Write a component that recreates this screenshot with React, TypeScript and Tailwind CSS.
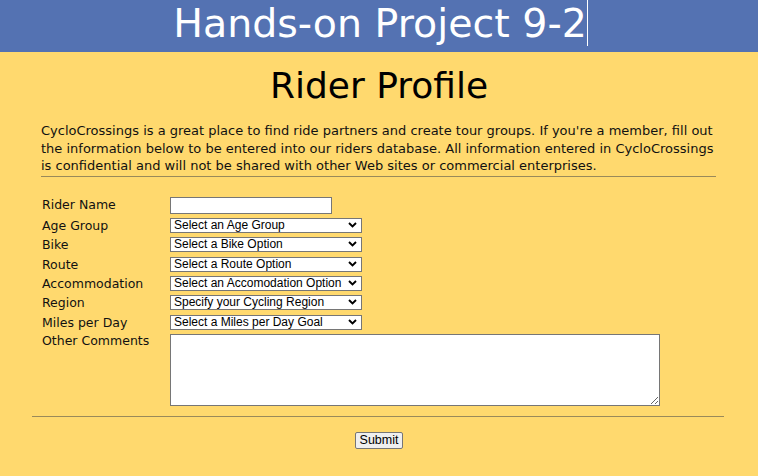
import React from "react";

const font = { fontFamily: '"DejaVu Sans", Verdana, sans-serif' };
const arial = { fontFamily: '"Liberation Sans", Arial, sans-serif' };

function Chevron() {
  return (
    <svg width="9" height="6" viewBox="0 0 9 6" className="pointer-events-none absolute right-[5px] top-[4px]">
      <path d="M1 1 L4.5 4.5 L8 1" stroke="#000" strokeWidth="1.9" fill="none" />
    </svg>
  );
}

function Sel({ text }: { text: string }) {
  return (
    <div className="relative w-[192px] h-[15px]">
      <select
        defaultValue="a"
        className="block w-full h-[15px] appearance-none border border-[#767676] bg-white pl-[3px] pr-[14px] py-0 text-[12px] leading-[13px] text-black outline-none"
        style={arial}
      >
        <option value="a">{text}</option>
      </select>
      <Chevron />
    </div>
  );
}

const rows: [string, string][] = [
  ["Age Group", "Select an Age Group"],
  ["Bike", "Select a Bike Option"],
  ["Route", "Select a Route Option"],
  ["Accommodation", "Select an Accomodation Option"],
  ["Region", "Specify your Cycling Region"],
  ["Miles per Day", "Select a Miles per Day Goal"],
];

export default function App() {
  return (
    <div className="w-[758px] h-[476px] bg-[#ffd96e] overflow-hidden" style={font}>
      <header className="h-[52px] bg-[#5472b2] flex justify-center items-start">
        <h1 className="relative text-white text-[39.5px] leading-[46px] pl-[2px]">
          Hands-on Project 9-2
          <span className="absolute -right-[1px] top-0 h-[46px] w-px bg-white" />
        </h1>
      </header>
      <h2 className="text-center text-[36px] leading-[40px] text-black mt-[14px]">Rider Profile</h2>
      <p className="mx-[41px] mt-[16px] text-[13px] leading-[17.5px] text-[#111]">
        CycloCrossings is a great place to find ride partners and create tour groups. If you're a member, fill out
        the information below to be entered into our riders database. All information entered in CycloCrossings
        is confidential and will not be shared with other Web sites or commercial enterprises.
      </p>
      <div className="ml-[41px] mr-[42px] mt-[1px] h-px bg-[#9a8a5a]" />
      <form className="ml-[42px] mt-[20px] flex flex-col gap-[4.4px] text-[12.5px] text-[#111]">
        <div className="flex items-center h-[17px]">
          <label className="w-[128px]">Rider Name</label>
          <input type="text" className="w-[162px] h-[17px] border border-[#767676] bg-white outline-none" />
        </div>
        {rows.map(([l, t]) => (
          <div key={l} className="flex items-center h-[15px]">
            <label className="w-[128px] leading-[15px]">{l}</label>
            <Sel text={t} />
          </div>
        ))}
        <div className="flex items-start">
          <label className="w-[128px] leading-[15px] -mt-[1px]">Other Comments</label>
          <textarea className="w-[490px] h-[72px] border border-[#767676] bg-white outline-none resize" />
        </div>
      </form>
      <div className="ml-[32px] mr-[34px] mt-[10px] h-px bg-[#9a8a5a]" />
      <div className="flex justify-center mt-[15px]">
        <button
          className="h-[17px] px-[4px] border border-[#767676] rounded-[2px] bg-[#efefef] text-[12.5px] leading-[13px] text-black"
          style={arial}
        >
          Submit
        </button>
      </div>
    </div>
  );
}
